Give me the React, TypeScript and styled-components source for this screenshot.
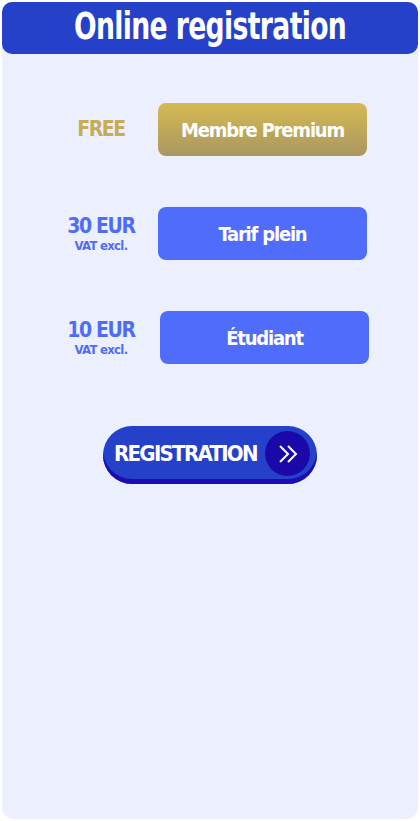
import styled, { createGlobalStyle } from "styled-components";

const Global = createGlobalStyle`
    html, body {
        margin: 0;
        padding: 0;
        background: #ffffff;
    }
    body {
        font-family: "DejaVu Sans", "Liberation Sans", sans-serif;
        font-stretch: condensed;
    }`

const Page = styled.div`
    width: 420px;
    height: 821px;
    padding: 2px;
    box-sizing: border-box;`

const Card = styled.div`
    height: 100%;
    background: #ecf0fe;
    border-radius: 10px 10px 12px 12px;
    display: flex;
    flex-direction: column;
    align-items: center;`

const Header = styled.div`
    width: 100%;
    height: 52px;
    background: #2641c9;
    border-radius: 10px;
    display: flex;
    align-items: center;
    justify-content: center;

    h1 {
        margin: 0;
        color: #fff;
        font-size: 37px;
        font-weight: 700;
        letter-spacing: -0.8px;
        padding-bottom: 3px;
        transform: scaleX(0.8);
        white-space: nowrap;
    }`

const Rows = styled.div`
    align-self: stretch;
    margin-top: 49px;
    padding-left: 53px;
    display: flex;
    flex-direction: column;
    gap: 51px;`

const Row = styled.div<{ $shift?: number }>`
    display: grid;
    grid-template-columns: 92px 209px;
    column-gap: ${p => 11 + (p.$shift || 0)}px;
    align-items: center;`

const Price = styled.div<{ $gold?: boolean }>`
    display: flex;
    flex-direction: column;
    align-items: center;
    color: ${p => p.$gold ? "#c8ac55" : "#4f6cf4"};
    font-weight: 700;
    line-height: 1;

    strong {
        font-size: 21px;
        letter-spacing: -1.4px;
    }

    span {
        font-size: 13px;
        margin-top: 2px;
        letter-spacing: -0.7px;
    }`

const Option = styled.button<{ $gold?: boolean }>`
    width: 209px;
    height: 53px;
    border: 0;
    border-radius: 8px;
    background: ${p => p.$gold
        ? "linear-gradient(180deg, #d6b953 0%, #a99760 100%)"
        : "#4f6cfb"};
    color: #fff;
    font-family: inherit;
    font-stretch: condensed;
    font-size: 20px;
    font-weight: 700;
    letter-spacing: -1.2px;
    cursor: pointer;`

const Register = styled.button`
    margin-top: 62px;
    width: 214px;
    height: 58px;
    border: 0;
    padding: 3px 7px 6px 11px;
    border-radius: 29px;
    background: #2641c9;
    box-shadow: inset 0 -5px 0 #1c0db3;
    display: flex;
    align-items: center;
    justify-content: space-between;
    box-sizing: border-box;
    color: #fff;
    font-family: inherit;
    font-stretch: condensed;
    font-size: 22px;
    font-weight: 700;
    letter-spacing: -1.7px;
    cursor: pointer;`

const Arrow = styled.span`
    flex: none;
    width: 45px;
    height: 45px;
    border-radius: 50%;
    background: #1a09a8;
    display: flex;
    align-items: center;
    justify-content: center;`

export default function App() {
    const options = [
        { price: "FREE", vat: false, label: "Membre Premium", gold: true, shift: 0 },
        { price: "30 EUR", vat: true, label: "Tarif plein", gold: false, shift: 0 },
        { price: "10 EUR", vat: true, label: "Étudiant", gold: false, shift: 2 },
    ]

    return (
        <>
            <Global />
            <Page>
                <Card>
                    <Header>
                        <h1>Online registration</h1>
                    </Header>
                    <Rows>
                        {options.map(o => (
                            <Row key={o.label} $shift={o.shift}>
                                <Price $gold={o.gold}>
                                    <strong>{o.price}</strong>
                                    {o.vat && <span>VAT excl.</span>}
                                </Price>
                                <Option $gold={o.gold}>{o.label}</Option>
                            </Row>
                        ))}
                    </Rows>
                    <Register>
                        REGISTRATION
                        <Arrow>
                            <svg width="22" height="20" viewBox="0 0 22 20" fill="none" stroke="#fff" strokeWidth="2">
                                <path d="M3 2 L11 10 L3 18" />
                                <path d="M11 2 L19 10 L11 18" />
                            </svg>
                        </Arrow>
                    </Register>
                </Card>
            </Page>
        </>
    )
}
